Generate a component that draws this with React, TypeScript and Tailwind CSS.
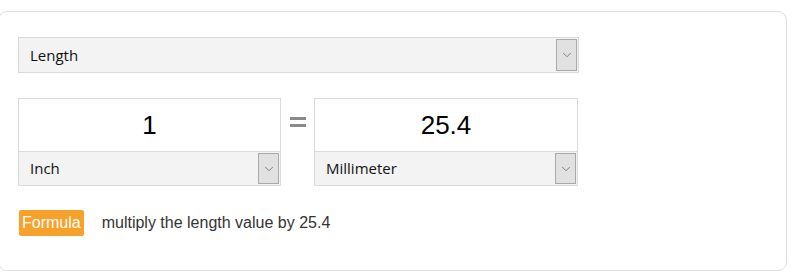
import { ChevronDown } from "lucide-react";

function SelectBox({ label, className = "" }: { label: string; className?: string }) {
  return (
    <div className={`flex items-stretch bg-[#f3f3f3] ${className}`}>
      <span className="flex flex-1 items-center pl-[11px] text-[15px] text-[#111]">
        {label}
      </span>
      <span className="m-px flex w-[21px] items-center justify-center border border-[#a9a9a9] bg-[#e1e1e1]">
        <ChevronDown size={14} strokeWidth={1.2} className="text-[#555]" />
      </span>
    </div>
  );
}

function UnitBox({ value, unit, width }: { value: string; unit: string; width: string }) {
  return (
    <div className={`flex flex-col border border-[#d9d9d9] ${width}`}>
      <div className="flex h-[52px] items-center justify-center bg-white font-['Liberation_Sans',Arial,sans-serif] text-[26px] text-black">
        {value}
      </div>
      <SelectBox label={unit} className="h-[34px] border-t border-[#dcdcdc]" />
    </div>
  );
}

export default function App() {
  return (
    <div className="h-[280px] w-[797px] overflow-hidden bg-white pt-[11px] font-['Open_Sans','Noto_Sans',sans-serif]">
      <div className="-ml-[2px] h-[260px] w-[789px] rounded-[9px] border border-[#dedede] bg-white pl-[19px] pt-[25px]">
        <SelectBox
          label="Length"
          className="h-[36px] w-[561px] border border-[#d9d9d9]"
        />

        <div className="mt-[25px] flex items-start">
          <UnitBox value="1" unit="Inch" width="w-[263px]" />
          <div className="flex w-[33px] flex-col items-center pt-[19px]">
            <span className="h-[3px] w-[16px] bg-[#8a8a8a]" />
            <span className="mt-[4px] h-[3px] w-[16px] bg-[#8a8a8a]" />
          </div>
          <UnitBox value="25.4" unit="Millimeter" width="w-[264px]" />
        </div>

        <div className="mt-[24px] flex items-center font-['Liberation_Sans',Arial,sans-serif] text-[16px]">
          <span className="ml-[1px] rounded-[2px] bg-[#f5a12a] px-[3px] py-[1px] text-white">
            Formula
          </span>
          <span className="ml-[18px] text-[#333]">multiply the length value by 25.4</span>
        </div>
      </div>
    </div>
  );
}
